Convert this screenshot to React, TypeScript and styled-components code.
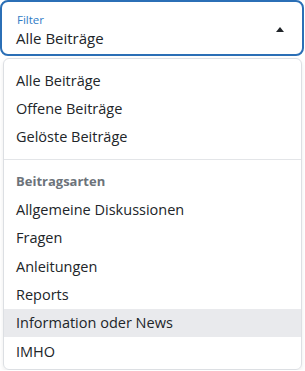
import styled, { createGlobalStyle } from "styled-components";

const GlobalStyle = createGlobalStyle`
  body {
    margin: 0;
    background: #fff;
    font-family: "Open Sans", "Liberation Sans", sans-serif;
    color: #212529;
  }
`;

const Wrapper = styled.div`
  width: 305px;
`;

const SelectBox = styled.div`
  display: flex;
  align-items: flex-start;
  justify-content: space-between;
  width: 304px;
  height: 56px;
  box-sizing: border-box;
  border: 2px solid #2b6fb6;
  border-radius: 8px;
  padding: 11px 18px 0 14px;
`;

const SelectText = styled.div`
  display: flex;
  flex-direction: column;
`;

const Label = styled.span`
  font-size: 11.5px;
  line-height: 14px;
  color: #2f7dc6;
  margin-left: 1px;
`;

const Value = styled.span`
  font-size: 15px;
  line-height: 22px;
`;

const Caret = styled.span`
  width: 0;
  height: 0;
  border-left: 4.5px solid transparent;
  border-right: 4.5px solid transparent;
  border-bottom: 5px solid #212529;
  margin-top: 14px;
`;

const Menu = styled.ul`
  list-style: none;
  margin: 2px 0 0 3px;
  padding: 7px 0 3px;
  width: 299px;
  box-sizing: border-box;
  border: 1px solid #dcdfe3;
  border-radius: 6px;
  box-shadow: 0 2px 4px rgba(0, 0, 0, 0.08);
`;

const Item = styled.li<{ $active?: boolean }>`
  height: 28.4px;
  display: flex;
  align-items: center;
  padding: 0 12px;
  font-size: 14.5px;
  background: ${(p) => (p.$active ? "#e9eaed" : "transparent")};
`;

const Header = styled.li`
  height: 28px;
  display: flex;
  align-items: center;
  padding: 0 12px;
  font-size: 13px;
  font-weight: 700;
  color: #6c737a;
`;

const Divider = styled.li`
  height: 1px;
  background: #e3e5e8;
  margin: 8px 0 7px;
`;

const App = () => {
  return (
    <Wrapper>
      <GlobalStyle />
      <SelectBox>
        <SelectText>
          <Label>Filter</Label>
          <Value>Alle Beiträge</Value>
        </SelectText>
        <Caret />
      </SelectBox>
      <Menu>
        <Item>Alle Beiträge</Item>
        <Item>Offene Beiträge</Item>
        <Item>Gelöste Beiträge</Item>
        <Divider />
        <Header>Beitragsarten</Header>
        <Item>Allgemeine Diskussionen</Item>
        <Item>Fragen</Item>
        <Item>Anleitungen</Item>
        <Item>Reports</Item>
        <Item $active>Information oder News</Item>
        <Item>IMHO</Item>
      </Menu>
    </Wrapper>
  );
};

export default App;
